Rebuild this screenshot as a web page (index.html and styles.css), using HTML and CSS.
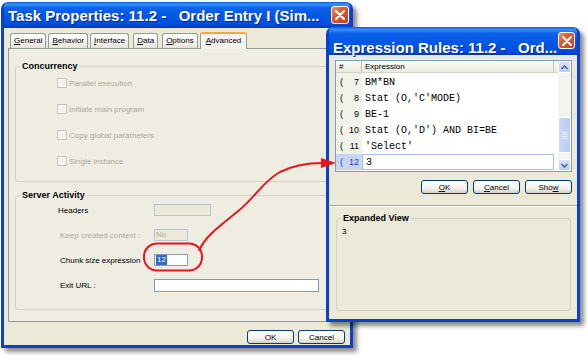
FILE: index.html
```html
<!DOCTYPE html>
<html lang="en">
<head>
  <meta charset="UTF-8" />
  <title>Task Properties</title>
  <link rel="stylesheet" href="styles.css">
</head>
<body>
  <div class="desk">

    <!-- Task properties dialog -->
    <div class="win win-main">
      <div class="titlebar">
        <span class="title">Task Properties: 11.2 -&nbsp;&nbsp; Order Entry I (Sim...</span>
        <span class="close">
          <svg width="10" height="10" viewBox="0 0 10 10"><path d="M1 1 L9 9 M9 1 L1 9" stroke="#fff" stroke-width="2.2" stroke-linecap="round"/></svg>
        </span>
      </div>
      <div class="client">
        <div class="tabs">
          <div class="tab"><u>G</u>eneral</div>
          <div class="tab"><u>B</u>ehavior</div>
          <div class="tab"><u>I</u>nterface</div>
          <div class="tab tab-gap"><u>D</u>ata</div>
          <div class="tab tab-gap"><u>O</u>ptions</div>
          <div class="tab active"><u>A</u>dvanced</div>
        </div>
        <div class="panel">
          <fieldset class="group group-conc">
            <legend>Concurrency</legend>
            <div class="checks">
              <div class="check"><span class="box"></span>Parallel execution</div>
              <div class="check"><span class="box"></span>Initiate main program</div>
              <div class="check"><span class="box"></span>Copy global parameters</div>
              <div class="check"><span class="box"></span>Single instance</div>
            </div>
          </fieldset>
          <fieldset class="group group-server">
            <legend>Server Activity</legend>
            <div class="form">
              <div class="lbl lbl-head">Headers</div>
              <div class="field field-off field-wide"></div>
              <div class="lbl off">Keep created context :</div>
              <div class="field field-off">No</div>
              <div class="lbl">Chunk size expression</div>
              <div class="field"><span class="sel">12</span></div>
              <div class="lbl">Exit URL :</div>
              <div class="field field-url"></div>
            </div>
          </fieldset>
        </div>
        <div class="footer">
          <button class="btn">OK</button>
          <button class="btn">Cancel</button>
        </div>
      </div>
    </div>

    <!-- Expression rules dialog -->
    <div class="win win-expr">
      <div class="titlebar titlebar-expr">
        <span class="title">Expression Rules: 11.2 -&nbsp;&nbsp; Ord...</span>
        <span class="close close-expr">
          <svg width="10" height="10" viewBox="0 0 10 10"><path d="M1 1 L9 9 M9 1 L1 9" stroke="#fff" stroke-width="2.2" stroke-linecap="round"/></svg>
        </span>
      </div>
      <div class="client client-expr">
        <div class="list">
          <div class="list-main">
            <div class="list-head">
              <div class="hcell hnum">#</div>
              <div class="hcell hexpr">Expression</div>
              <div class="hcell hfill"></div>
            </div>
            <div class="rows">
              <div class="row"><span class="num"><span>(</span><span>7</span></span><span class="expr">BM*BN</span></div>
              <div class="row"><span class="num"><span>(</span><span>8</span></span><span class="expr">Stat (O,'C'MODE)</span></div>
              <div class="row"><span class="num"><span>(</span><span>9</span></span><span class="expr">BE-1</span></div>
              <div class="row"><span class="num"><span>(</span><span>10</span></span><span class="expr">Stat (O,'D') AND BI=BE</span></div>
              <div class="row"><span class="num"><span>(</span><span>11</span></span><span class="expr">'Select'</span></div>
              <div class="row current"><span class="num"><span>(</span><span>12</span></span><span class="expr">3</span></div>
            </div>
          </div>
          <div class="scroll">
            <div class="sbtn">
              <svg width="7" height="5" viewBox="0 0 7 5"><path d="M0.5 4 L3.5 1 L6.5 4" fill="none" stroke="#4d6185" stroke-width="1.5"/></svg>
            </div>
            <div class="track"><div class="thumb"><i></i><i></i><i></i><i></i></div></div>
            <div class="sbtn">
              <svg width="7" height="5" viewBox="0 0 7 5"><path d="M0.5 1 L3.5 4 L6.5 1" fill="none" stroke="#4d6185" stroke-width="1.5"/></svg>
            </div>
          </div>
        </div>
        <div class="actions">
          <button class="btn"><u>O</u>K</button>
          <button class="btn"><u>C</u>ancel</button>
          <button class="btn">Sho<u>w</u></button>
        </div>
        <div class="sep"></div>
        <fieldset class="group group-view">
          <legend>Expanded View</legend>
          <div class="view-text">3</div>
        </fieldset>
      </div>
    </div>

    <!-- red callout linking the two dialogs -->
    <svg class="callout" width="588" height="360" viewBox="0 0 588 360">
      <rect x="144" y="243.5" width="58" height="27" rx="13" fill="none" stroke="#e8141c" stroke-width="2"/>
      <path d="M199 251 C204 237 221 225 237 212 C256 197 262 182 280 172 C292 166 305 163 323 163" fill="none" stroke="#e8141c" stroke-width="2"/>
      <polygon points="321,158 336,163 321,168" fill="#e8141c"/>
    </svg>
  </div>
</body>
</html>
```

FILE: styles.css
```css
/* General */
* {
  box-sizing: border-box;
}

body {
  margin: 0;
  background: #fff;
  font-family: "Liberation Sans", Arial, sans-serif;
  font-size: 8px;
  color: #000;
}

.desk {
  position: relative;
  width: 588px;
  height: 360px;
  overflow: hidden;
}

/* Windows */
.win {
  position: absolute;
  display: flex;
  flex-direction: column;
  background: #ece9d8;
  border: 3px solid #0a3fd0;
  border-top: 0;
  border-radius: 7px 7px 0 0;
  overflow: hidden;
  box-shadow: 4px 4px 4px rgba(0, 0, 0, 0.45);
}

.win-main {
  left: 1px;
  top: 2px;
  width: 352px;
  height: 346px;
}

.win-expr {
  left: 326px;
  top: 27px;
  width: 254px;
  height: 295px;
}

.titlebar {
  display: flex;
  align-items: center;
  justify-content: space-between;
  height: 26px;
  margin: 0 -3px;
  padding: 0 4px 0 7px;
  background: linear-gradient(#0a5fe8 0%, #3d8ef7 10%, #0c62ea 22%, #0057e6 55%, #004fdc 85%, #003bbd 100%);
  color: #fff;
  font-weight: bold;
  font-size: 15px;
  text-shadow: 1px 1px 0 #0b2a8c;
  white-space: nowrap;
}

.titlebar-expr {
  height: 28px;
  padding-right: 5px;
  align-items: flex-start;
}

.titlebar-expr .title {
  margin-top: 12px;
}

.close {
  display: flex;
  align-items: center;
  justify-content: center;
  width: 18px;
  height: 18px;
  border: 1px solid #fff;
  border-radius: 3px;
  background: linear-gradient(135deg, #f09070 0%, #e0582e 40%, #c9401c 100%);
  text-shadow: none;
}

.close-expr {
  width: 17px;
  height: 17px;
  margin-top: 5px;
}

.client {
  flex: 1;
  display: flex;
  flex-direction: column;
}

/* Tabs */
.tabs {
  display: flex;
  align-items: flex-end;
  height: 20px;
  padding-left: 6px;
  gap: 2px;
}

.tab {
  height: 15px;
  padding: 0 3px;
  line-height: 14px;
  border: 1px solid #919b9c;
  border-bottom: 0;
  border-radius: 3px 3px 0 0;
  background: linear-gradient(#ffffff, #f0efe9 70%, #e3e1d6);
}

.tab-gap {
  margin-left: 2px;
}

.tab.active {
  height: 17px;
  margin-left: 0;
  margin-bottom: -1px;
  position: relative;
  border-top: 2px solid #f2a83a;
  background: #f4f3ee;
  padding: 0 5px;
}

.panel {
  height: 274px;
  margin: 0 1px 0 4px;
  padding: 12px 6px 0 6px;
  border: 1px solid #919b9c;
  background: #efede2;
}

/* Group boxes */
.group {
  margin: 0;
  padding: 0;
  border: 1px solid #d6d0c6;
  border-radius: 3px;
}

.group legend {
  margin-left: 4px;
  padding: 0 2px;
  font-weight: bold;
  font-size: 9px;
  line-height: 11px;
}

.group-conc {
  height: 121px;
}

.checks {
  display: flex;
  flex-direction: column;
  gap: 16px;
  padding: 6px 0 0 41px;
}

.check {
  display: flex;
  align-items: center;
  height: 10px;
  gap: 2px;
  color: #aca899;
}

.box {
  width: 10px;
  height: 10px;
  border: 1px solid #cac8bb;
  background: #f4f3ee;
}

.group-server {
  height: 120px;
  margin-top: 8px;
}

.form {
  display: grid;
  grid-template-columns: 94px auto;
  grid-auto-rows: 12px;
  row-gap: 13px;
  align-items: center;
  justify-items: start;
  padding: 3px 0 0 44px;
}

.lbl-head {
  margin-left: -2px;
}

.off {
  color: #aca899;
}

.field {
  width: 34px;
  height: 12px;
  padding-left: 1px;
  border: 1px solid #7f9db9;
  background: #fff;
  line-height: 10px;
}

.field-off {
  border-color: #b9c4d2;
  background: #ece9d8;
  color: #aca899;
}

.field-wide {
  width: 57px;
}

.field-url {
  width: 165px;
  height: 13px;
}

.sel {
  display: inline-block;
  background: #316ac5;
  color: #fff;
  padding: 0 1px;
}

/* Buttons */
.footer {
  display: flex;
  justify-content: flex-end;
  gap: 4px;
  padding: 8px 5px 0 0;
}

.btn {
  width: 47px;
  height: 14px;
  padding: 0;
  border: 1px solid #003c74;
  border-radius: 3px;
  background: linear-gradient(#ffffff, #f3f3ef 60%, #d6d0c5);
  font-family: inherit;
  font-size: 8px;
  color: #000;
}

/* Expression rules */
.client-expr {
  padding: 5px 5px 0 6px;
}

.list {
  display: flex;
  height: 112px;
  border: 1px solid #7f9db9;
  background: #fff;
}

.list-main {
  flex: 1;
  display: flex;
  flex-direction: column;
}

.list-head {
  display: flex;
  height: 12px;
  background: linear-gradient(#fbfbf9, #ebeadb);
  border-bottom: 1px solid #d6d2c2;
}

.hcell {
  line-height: 11px;
  padding-left: 3px;
}

.hnum {
  width: 26px;
  border-right: 1px solid #c7c5b2;
}

.hexpr {
  width: 192px;
  border-right: 1px solid #c7c5b2;
}

.hfill {
  flex: 1;
}

.rows {
  flex: 1;
  padding-top: 1px;
  background: linear-gradient(to right, #f3f2ea 26px, #fff 26px);
}

.row {
  display: flex;
  height: 16px;
  align-items: stretch;
}

.num {
  display: flex;
  justify-content: space-between;
  align-items: center;
  width: 26px;
  padding: 0 3px 0 4px;
  font-size: 9px;
}

.expr {
  flex: 1;
  display: flex;
  align-items: center;
  padding-left: 3px;
  font-family: "Liberation Mono", "Courier New", monospace;
  font-size: 10px;
}

.row.current .num {
  background: #c8d6f6;
  color: #2140c8;
}

.row.current .expr {
  border: 1px solid #a8bde6;
  margin-right: 4px;
}

.scroll {
  display: flex;
  flex-direction: column;
  width: 13px;
  background: #f4f3ee;
}

.sbtn {
  display: flex;
  align-items: center;
  justify-content: center;
  height: 12px;
  border: 1px solid #fff;
  border-radius: 2px;
  background: linear-gradient(#d8e4fd, #b9cdf8);
}

.track {
  flex: 1;
  padding-top: 44px;
}

.thumb {
  display: flex;
  flex-direction: column;
  align-items: center;
  justify-content: center;
  gap: 1px;
  height: 36px;
  border: 1px solid #fff;
  border-radius: 2px;
  background: linear-gradient(to right, #c9d8fc, #b7cbf6);
}

.thumb i {
  width: 6px;
  height: 1px;
  background: #e8effe;
}

.actions {
  display: flex;
  justify-content: flex-end;
  gap: 5px;
  margin-top: 8px;
}

.actions .btn {
  width: 47px;
}

.sep {
  height: 2px;
  margin: 11px -5px 0 -6px;
  border-top: 1px solid #aca899;
  border-bottom: 1px solid #fff;
}

.group-view {
  height: 98px;
  margin: 6px 1px 0 1px;
}

.view-text {
  padding: 3px 0 0 5px;
}

/* Callout overlay */
.callout {
  position: absolute;
  left: 0;
  top: 0;
  pointer-events: none;
}
```
